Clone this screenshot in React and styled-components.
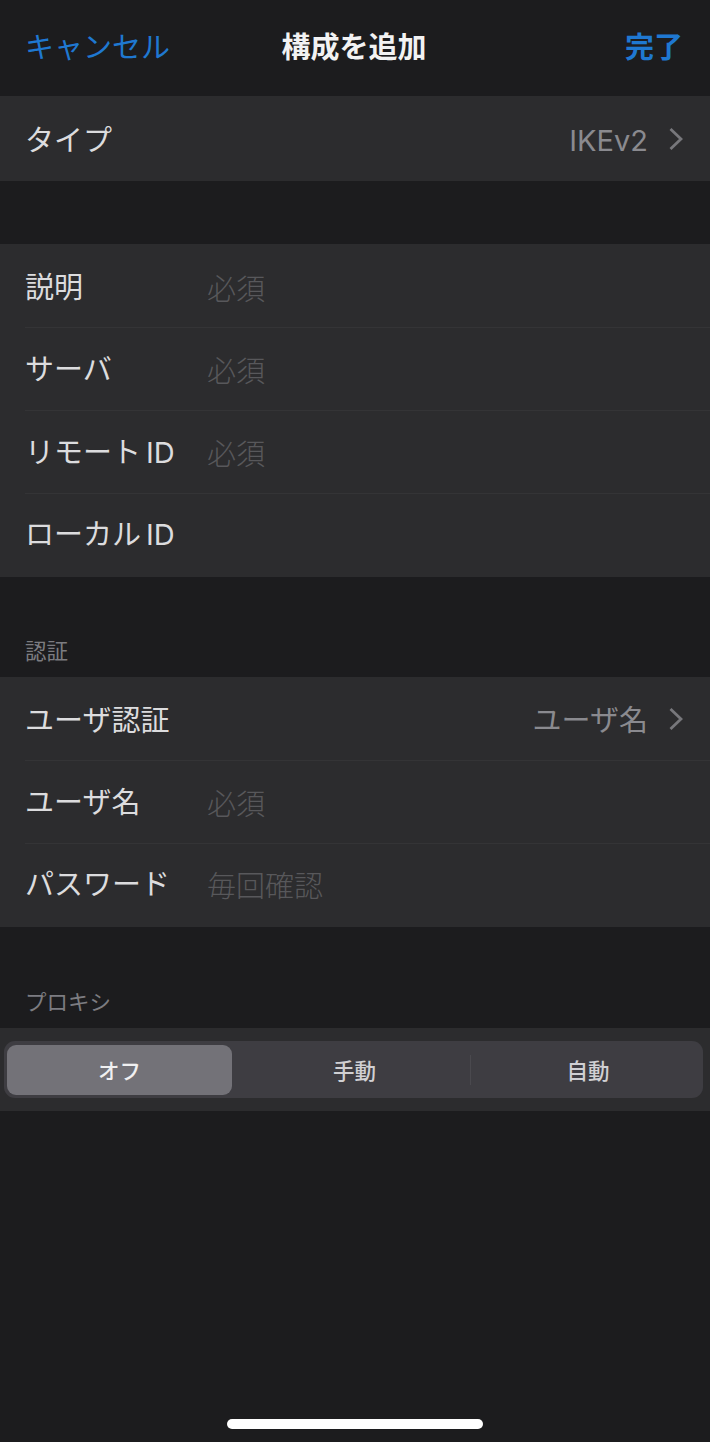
import React, { useState } from 'react';
import styled, { createGlobalStyle } from 'styled-components';

const GlobalStyle = createGlobalStyle`
    * {
        box-sizing: border-box;
    }
    body {
        margin: 0;
        background: #1c1c1e;
        font-family: Inter, "Noto Sans CJK JP", sans-serif;
    }
    button, input {
        font: inherit;
        border: 0;
        padding: 0;
        background: none;
    }
`

const Screen = styled.main`
    display: flex;
    flex-direction: column;
    width: 710px;
    height: 1442px;
    background: #1c1c1e;
    color: #dcdcde;
    font-size: 29px;
    line-height: 40px;
`

const NavBar = styled.header`
    display: grid;
    grid-template-columns: 1fr auto 1fr;
    align-items: center;
    height: 96px;
    padding: 0 27px 0 25px;
`

const Title = styled.h1`
    margin: 0;
    color: #f2f2f3;
    font-size: 29px;
    font-weight: 700;
`

const NavButton = styled.button`
    justify-self: ${props => props.$end ? "end" : "start"};
    color: #1f78d1;
    font-weight: ${props => props.$end ? 700 : 400};
`

const Group = styled.section`
    background: #2c2c2e;
    margin-bottom: ${props => props.$gap || 0}px;
`

const Row = styled.label`
    display: flex;
    align-items: center;
    height: ${props => props.$height || 83}px;
    margin-left: 25px;
    padding: 2px 27px 0 0;
    & + & {
        border-top: 1px solid #343436;
    }
    &:last-child {
        padding-top: 0;
        padding-bottom: 1px;
    }
    &:first-child {
        padding-top: 5px;
        padding-bottom: 0;
    }
`

const Name = styled.span`
    width: 182px;
    white-space: nowrap;
`

const Latin = styled.span`
    margin-left: 5px;
`

const Field = styled.input`
    flex: 1;
    min-width: 0;
    height: 40px;
    margin-top: 3px;
    outline: 0;
    color: #dcdcde;
    &::placeholder {
        color: #58585b;
        opacity: 1;
        font-weight: 300;
    }
`

const Value = styled.span`
    margin-left: auto;
    margin-right: 21px;
    color: #8a8a8f;
`

const Caption = styled.h2`
    display: flex;
    align-items: flex-end;
    height: ${props => props.$height}px;
    margin: 0;
    padding: 0 25px 11px;
    color: #7c7c81;
    font-size: 21.5px;
    font-weight: 400;
    line-height: 30px;
`

const SegmentBar = styled.div`
    padding: 13px 7px 13px 4px;
`

const Segments = styled.div`
    display: grid;
    grid-template-columns: 232px 234px 1fr;
    height: 57px;
    padding: 4px 0 3px 0;
    border-radius: 11px;
    background: #3e3d42;
`

const Segment = styled.button`
    display: flex;
    align-items: center;
    justify-content: center;
    margin: 0 4px 0 ${props => props.$first ? 3 : 7}px;
    padding-top: 1px;
    border-radius: 9px;
    background: ${props => props.$active ? "#737278" : "transparent"};
    color: ${props => props.$active ? "#f0f0f1" : "#d0d0d3"};
    font-size: 21.5px;
    font-weight: 500;
`

const SegmentCell = styled.div`
    display: grid;
    position: relative;
    &:last-child::before {
        content: "";
        position: absolute;
        left: 0;
        top: 10px;
        width: 1px;
        height: 30px;
        background: #4a494e;
    }
`

const HomeIndicator = styled.div`
    width: 256px;
    height: 10px;
    margin: auto auto 13px 227px;
    border-radius: 5px;
    background: #fff;
`

const Arrow = styled.svg`
    margin-bottom: 4px;
`

function Chevron() {
    return (
        <Arrow width="14" height="24" viewBox="0 0 14 24" fill="none"
            stroke="#77777b" strokeWidth="2.8">
            <path d="M1.5 2 L12 12 L1.5 22" />
        </Arrow>
    )
}

function TextRow({name, latin, placeholder, ...rest}) {
    return (
        <Row {...rest}>
            <Name>{name}{latin ? <Latin>{latin}</Latin> : null}</Name>
            <Field placeholder={placeholder} />
        </Row>
    )
}

function LinkRow({name, value, ...rest}) {
    return (
        <Row {...rest}>
            <Name>{name}</Name>
            <Value>{value}</Value>
            <Chevron />
        </Row>
    )
}

export default function App() {
    const [proxy, setProxy] = useState("オフ");

    return (
        <Screen>
            <GlobalStyle />
            <NavBar>
                <NavButton>キャンセル</NavButton>
                <Title>構成を追加</Title>
                <NavButton $end>完了</NavButton>
            </NavBar>
            <Group $gap={63}>
                <LinkRow name="タイプ" value="IKEv2" $height={85} />
            </Group>
            <Group>
                <TextRow name="説明" placeholder="必須" />
                <TextRow name="サーバ" placeholder="必須" />
                <TextRow name="リモート" latin="ID" placeholder="必須" />
                <TextRow name="ローカル" latin="ID" $height={84} />
            </Group>
            <Caption $height={100}>認証</Caption>
            <Group>
                <LinkRow name="ユーザ認証" value="ユーザ名" />
                <TextRow name="ユーザ名" placeholder="必須" />
                <TextRow name="パスワード" placeholder="毎回確認" $height={84} />
            </Group>
            <Caption $height={101}>プロキシ</Caption>
            <Group>
                <SegmentBar>
                    <Segments>
                        {["オフ", "手動", "自動"].map((label, i) =>
                            <SegmentCell key={label}>
                                <Segment $first={i === 0}
                                    $active={label === proxy}
                                    onClick={() => setProxy(label)}>
                                    {label}
                                </Segment>
                            </SegmentCell>
                        )}
                    </Segments>
                </SegmentBar>
            </Group>
            <HomeIndicator />
        </Screen>
    )
}
